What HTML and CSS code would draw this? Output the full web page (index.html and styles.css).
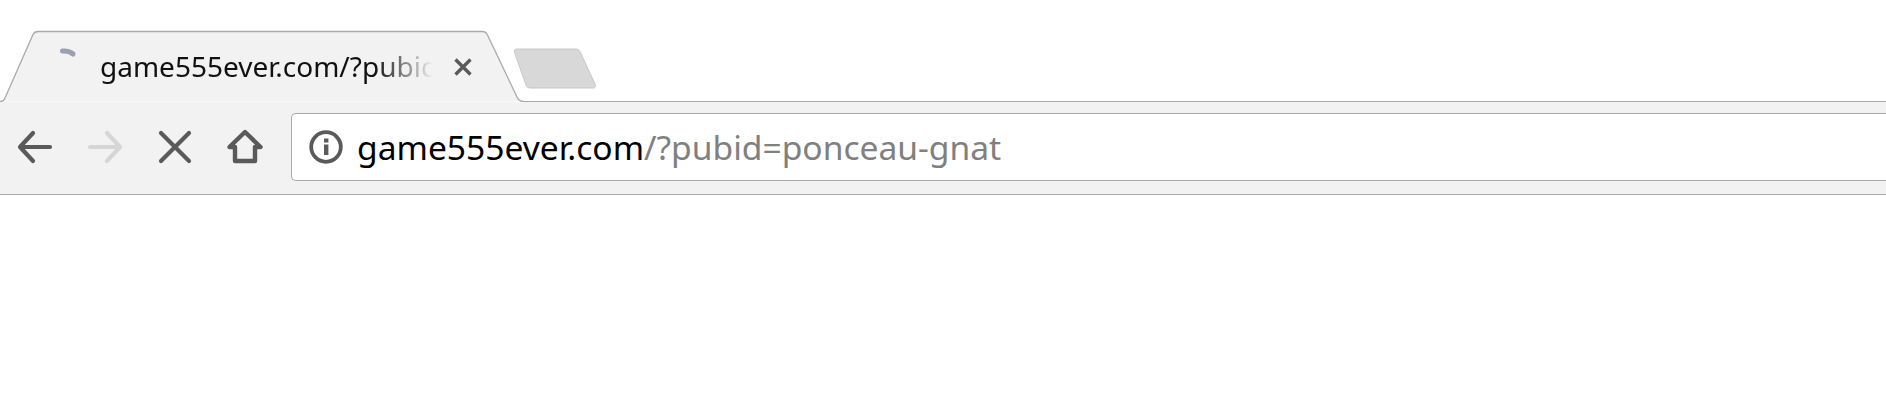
FILE: index.html
```html
<!DOCTYPE html>
<html lang="en">
<head>
  <meta charset="UTF-8" />
  <title>game555ever.com</title>
  <link rel="stylesheet" href="styles.css">
</head>
<body>

  <div class="tabstrip">
    <div class="tab">
      <svg class="tab-shape" width="524" height="76" viewBox="0 0 524 76">
        <path d="M0 75.500 H1 Q3.500 75.500 5 72 L33 8.500 Q34.500 5.500 38 5.500 H482 Q486 5.500 487.500 9 L517 71 Q519 75.500 524 75.500" fill="#f2f2f2" stroke="#aaaaaa" stroke-width="1.300"/>
      </svg>
      <svg class="spinner" width="20" height="14" viewBox="0 0 20 14">
        <path d="M4.500 5 Q11 4.500 15 8" fill="none" stroke="#99a0b4" stroke-width="5" stroke-linecap="round"/>
      </svg>
      <span class="tab-title">game555ever.com/?pubid=ponceau-gnat</span>
      <svg class="tab-close" width="20" height="20" viewBox="0 0 20 20">
        <path d="M2.500 2.500 L17.500 17.500 M17.500 2.500 L2.500 17.500" stroke="#5a5a5a" stroke-width="3.400"/>
      </svg>
    </div>
    <svg class="newtab" width="86" height="42" viewBox="0 0 86 42">
      <path d="M3 1 H63 Q66 1 67 3.500 L82 36 Q83.500 40 80 40 H17 Q14 40 13 37 L1.500 4.500 Q1 1 3 1 Z" fill="#d8d8d8" stroke="#c8c8c8"/>
    </svg>
  </div>

  <div class="toolbar">
    <div class="nav">
      <svg width="36" height="36" viewBox="0 0 36 36">
        <path d="M33 18 H3 M16 4 L3 18 L16 32" fill="none" stroke="#5a5a5a" stroke-width="4.200" stroke-linecap="round" stroke-linejoin="round"/>
      </svg>
      <svg width="36" height="36" viewBox="0 0 36 36">
        <path d="M3 18 H33 M20 4 L33 18 L20 32" fill="none" stroke="#d6d6d6" stroke-width="4.200" stroke-linecap="round" stroke-linejoin="round"/>
      </svg>
      <svg width="36" height="36" viewBox="0 0 36 36">
        <path d="M4 4 L32 32 M32 4 L4 32" fill="none" stroke="#5a5a5a" stroke-width="4.200" stroke-linecap="round"/>
      </svg>
      <svg width="36" height="36" viewBox="0 0 36 36">
        <path d="M2.500 18 L18 3 L33.500 18 H28 V32 H8 V18 Z" fill="none" stroke="#5a5a5a" stroke-width="4.400" stroke-linejoin="round"/>
      </svg>
    </div>
    <div class="omnibox">
      <svg class="info" width="34" height="34" viewBox="0 0 34 34">
        <circle cx="17" cy="17" r="14.800" fill="none" stroke="#5a5a5a" stroke-width="3.800"/>
        <rect x="15" y="14.500" width="4.400" height="10.500" fill="#5a5a5a"/>
        <rect x="15" y="8.500" width="4.400" height="4" fill="#5a5a5a"/>
      </svg>
      <span class="url"><span class="host">game555ever.com</span>/?pubid=ponceau-gnat</span>
    </div>
  </div>

</body>
</html>
```

FILE: styles.css
```css
body {
  margin: 0;
  background: #ffffff;
  font-family: 'Noto Sans', sans-serif;
  overflow: hidden;
}

.tabstrip {
  display: flex;
  align-items: flex-start;
  height: 102px;
  padding-top: 26px;
  box-sizing: border-box;
}

.tab {
  position: relative;
  width: 524px;
  height: 76px;
  flex: none;
  display: flex;
  align-items: center;
  padding: 6px 0 0 100px;
  box-sizing: border-box;
}

.tab-shape {
  position: absolute;
  left: 0;
  top: 0;
}

.spinner {
  position: absolute;
  left: 58px;
  top: 20px;
}

.tab-title {
  position: relative;
  width: 333px;
  flex: none;
  margin-bottom: 2px;
  overflow: hidden;
  white-space: nowrap;
  font-size: 28px;
  color: #111111;
  -webkit-mask-image: linear-gradient(to right, #000 275px, transparent 333px);
  mask-image: linear-gradient(to right, #000 275px, transparent 333px);
}

.tab-close {
  position: relative;
  margin-left: 20px;
  flex: none;
}

.newtab {
  margin: 22px 0 0 -11px;
  flex: none;
}

.toolbar {
  display: flex;
  align-items: center;
  height: 93px;
  background: #f2f2f2;
  border-bottom: 1px solid #aaaaaa;
  padding: 0 0 2px 17px;
  box-sizing: border-box;
  position: relative;
}

.toolbar::before {
  content: "";
  position: absolute;
  left: 522px;
  right: 0;
  top: -1px;
  height: 1px;
  background: #aaaaaa;
}

.nav {
  display: flex;
  gap: 34px;
  flex: none;
}

.omnibox {
  flex: 1;
  height: 68px;
  margin-left: 28px;
  display: flex;
  align-items: center;
  background: #ffffff;
  border: 1px solid #aaaaaa;
  border-right: none;
  border-radius: 5px 0 0 5px;
  padding-left: 17px;
  box-sizing: border-box;
}

.url {
  margin-left: 14px;
  font-size: 33.600px;
  color: #808080;
  white-space: nowrap;
}

.host {
  color: #000000;
}
```
